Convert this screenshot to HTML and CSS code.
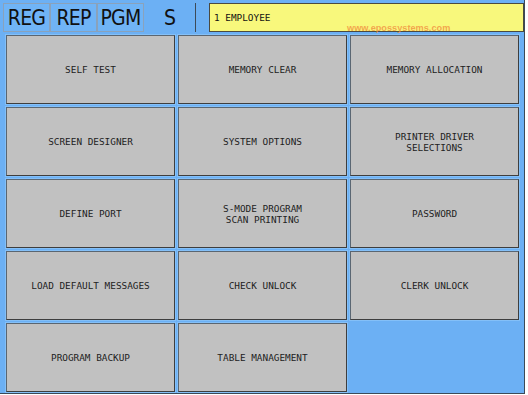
FILE: index.html
```html
<!DOCTYPE html>
<html>
<head>
<meta charset="utf-8">
<link rel="stylesheet" href="styles.css">
</head>
<body>
<div class="screen">
  <div class="topbar">
    <div class="tab">REG</div>
    <div class="tab">REP</div>
    <div class="tab">PGM</div>
    <div class="tab current">S</div>
    <div class="spacer"></div>
    <div class="status">1 EMPLOYEE</div>
  </div>
  <div class="grid">
    <div class="btn">SELF TEST</div>
    <div class="btn">MEMORY CLEAR</div>
    <div class="btn">MEMORY ALLOCATION</div>
    <div class="btn">SCREEN DESIGNER</div>
    <div class="btn">SYSTEM OPTIONS</div>
    <div class="btn">PRINTER DRIVER<br>SELECTIONS</div>
    <div class="btn">DEFINE PORT</div>
    <div class="btn">S-MODE PROGRAM<br>SCAN PRINTING</div>
    <div class="btn">PASSWORD</div>
    <div class="btn">LOAD DEFAULT MESSAGES</div>
    <div class="btn">CHECK UNLOCK</div>
    <div class="btn">CLERK UNLOCK</div>
    <div class="btn">PROGRAM BACKUP</div>
    <div class="btn">TABLE MANAGEMENT</div>
  </div>
  <div class="watermark">www.epossystems.com</div>
</div>
</body>
</html>
```

FILE: styles.css
```css
html, body {
  margin: 0;
  padding: 0;
  background: #ffffff;
}
.screen {
  position: relative;
  width: 524px;
  height: 393px;
  background: #6cb0f4;
  border-right: 1px solid #3c4a58;
  border-bottom: 1px solid #3c4a58;
}
.topbar {
  display: flex;
  height: 29px;
  padding: 3px 0 0 3px;
}
.tab {
  width: 45px;
  height: 27px;
  border: 1px solid #8aa2bb;
  background: #70b4f6;
  font-family: "DejaVu Sans Condensed", "DejaVu Sans", sans-serif;
  font-size: 21px;
  letter-spacing: -0.8px;
  line-height: 29px;
  text-align: center;
  color: #111;
}
.tab.current {
  width: 49px;
  border-color: transparent;
  background: transparent;
}
.spacer {
  width: 13px;
  border-left: 1px solid #3c4a58;
}
.status {
  width: 309px;
  height: 27px;
  background: #f8f87c;
  border: 1px solid #4a4a40;
  font-family: "DejaVu Sans Mono", monospace;
  font-size: 9.4px;
  line-height: 27px;
  padding-left: 4px;
  color: #111;
}
.grid {
  display: grid;
  grid-template-columns: repeat(3, 169px);
  grid-template-rows: repeat(5, 69px);
  gap: 3px;
  margin: 3px 0 0 6px;
}
.btn {
  display: flex;
  align-items: center;
  justify-content: center;
  text-align: center;
  background: #c1c1c1;
  border: 1px solid #5a6672;
  border-right-color: #3e3e3e;
  border-bottom-color: #3e3e3e;
  box-shadow: 0 0 0 1px #84c0f8;
  font-family: "DejaVu Sans Mono", monospace;
  font-size: 9.4px;
  line-height: 11px;
  color: #222;
}
.watermark {
  position: absolute;
  left: 347px;
  top: 23px;
  font-family: "Liberation Sans", sans-serif;
  font-weight: bold;
  font-size: 9.2px;
  color: rgba(240, 140, 60, 0.75);
}
```
